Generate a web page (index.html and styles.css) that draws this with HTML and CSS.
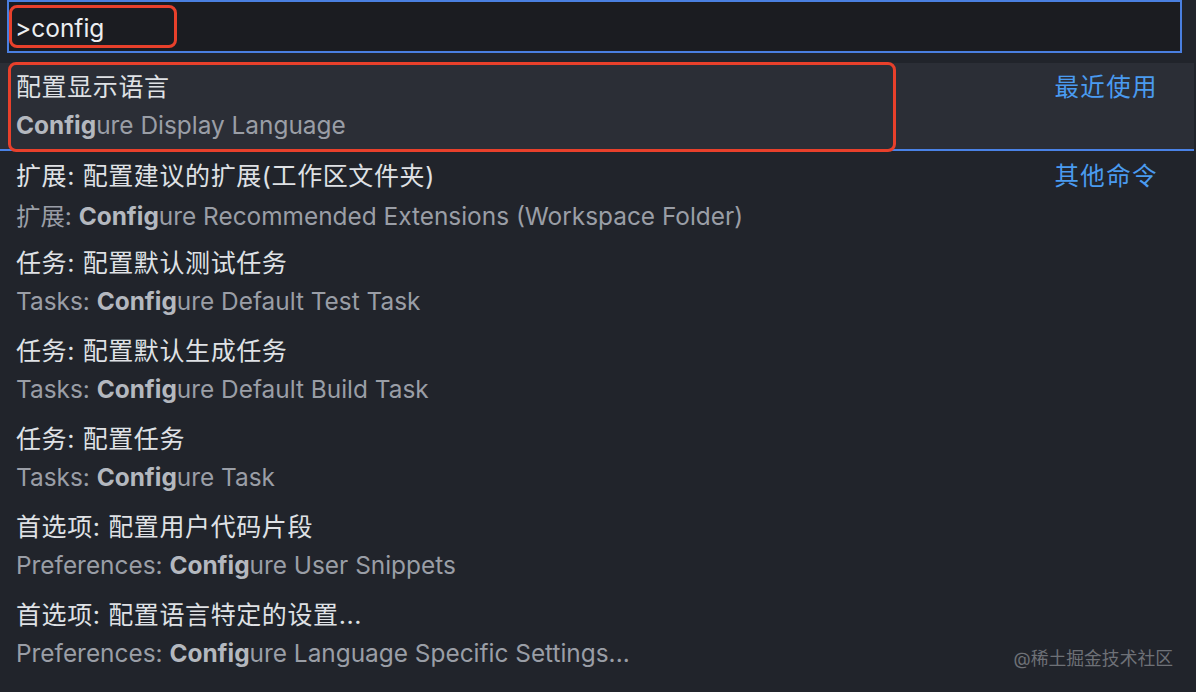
FILE: index.html
```html
<!DOCTYPE html>
<html lang="zh">
<head>
<meta charset="utf-8">
<link rel="stylesheet" href="styles.css">
</head>
<body>
<div class="palette">
  <div class="input-row">
    <div class="input">
      <span class="query">&gt;config</span>
    </div>
    <div class="mark mark-input"></div>
  </div>
  <div class="list">
    <div class="item selected">
      <div class="texts">
        <div class="title">配置显示语言</div>
        <div class="sub"><b>Config</b>ure Display Language</div>
      </div>
      <div class="tag">最近使用</div>
      <div class="mark mark-item"></div>
    </div>
    <div class="item">
      <div class="texts">
        <div class="title">扩展: 配置建议的扩展(工作区文件夹)</div>
        <div class="sub">扩展: <b>Config</b>ure Recommended Extensions (Workspace Folder)</div>
      </div>
      <div class="tag">其他命令</div>
    </div>
    <div class="item">
      <div class="texts">
        <div class="title">任务: 配置默认测试任务</div>
        <div class="sub">Tasks: <b>Config</b>ure Default Test Task</div>
      </div>
    </div>
    <div class="item">
      <div class="texts">
        <div class="title">任务: 配置默认生成任务</div>
        <div class="sub">Tasks: <b>Config</b>ure Default Build Task</div>
      </div>
    </div>
    <div class="item">
      <div class="texts">
        <div class="title">任务: 配置任务</div>
        <div class="sub">Tasks: <b>Config</b>ure Task</div>
      </div>
    </div>
    <div class="item">
      <div class="texts">
        <div class="title">首选项: 配置用户代码片段</div>
        <div class="sub">Preferences: <b>Config</b>ure User Snippets</div>
      </div>
    </div>
    <div class="item">
      <div class="texts">
        <div class="title">首选项: 配置语言特定的设置...</div>
        <div class="sub">Preferences: <b>Config</b>ure Language Specific Settings...</div>
      </div>
    </div>
  </div>
  <div class="watermark">@稀土掘金技术社区</div>
</div>
</body>
</html>
```
FILE: styles.css
```css
html, body {
  margin: 0;
  padding: 0;
  background: #21242b;
}
body {
  width: 1196px;
  height: 692px;
  overflow: hidden;
  font-family: Inter, "Noto Sans CJK SC", sans-serif;
}
.palette {
  position: relative;
  width: 1196px;
  height: 692px;
  background: #21242b;
}
.input-row {
  position: relative;
  padding: 0 14px 0 7px;
  height: 53px;
}
.input {
  height: 49px;
  border: 2px solid #4a7fe0;
  background: #1b1c21;
  display: flex;
  align-items: center;
  padding-left: 6px;
}
.query {
  color: #eceef1;
  font-size: 24.5px;
  line-height: 28px;
  position: relative;
  top: 1px;
}
.mark {
  position: absolute;
  border: 3px solid #e8402b;
  border-radius: 8px;
  pointer-events: none;
}
.mark-input {
  left: 9px;
  top: 5px;
  width: 162px;
  height: 37px;
}
.list {
  margin-top: 10px;
  margin-right: 2px;
}
.item {
  position: relative;
  display: flex;
  justify-content: space-between;
  height: 88px;
  padding-left: 16px;
  padding-right: 36px;
  box-sizing: border-box;
}
.item.selected {
  background: #2b2e36;
  border-bottom: 2px solid #4a82e6;
  height: 88px;
}
.item.selected + .item .texts {
  padding-top: 10px;
}
.item.selected + .item .title {
  height: 40px;
}
.texts {
  display: flex;
  flex-direction: column;
  padding-top: 9px;
}
.title {
  color: #dfe1e5;
  font-size: 25px;
  line-height: 30px;
  height: 38px;
  letter-spacing: 0.6px;
}
.sub {
  color: #9a9ea6;
  font-size: 24.4px;
  line-height: 30px;
}
.sub b {
  color: #b4b8bf;
  font-weight: 700;
}
.tag {
  color: #4a9bf0;
  font-size: 24.5px;
  line-height: 30px;
  padding-top: 9px;
  letter-spacing: 1.4px;
}
.selected + .item .tag {
  padding-top: 10px;
}
.mark-item {
  left: 8px;
  top: -1px;
  width: 882px;
  height: 84px;
}
.watermark {
  position: absolute;
  right: 23px;
  bottom: 23px;
  color: #6e7177;
  font-size: 17.8px;
  line-height: 20px;
}
```
